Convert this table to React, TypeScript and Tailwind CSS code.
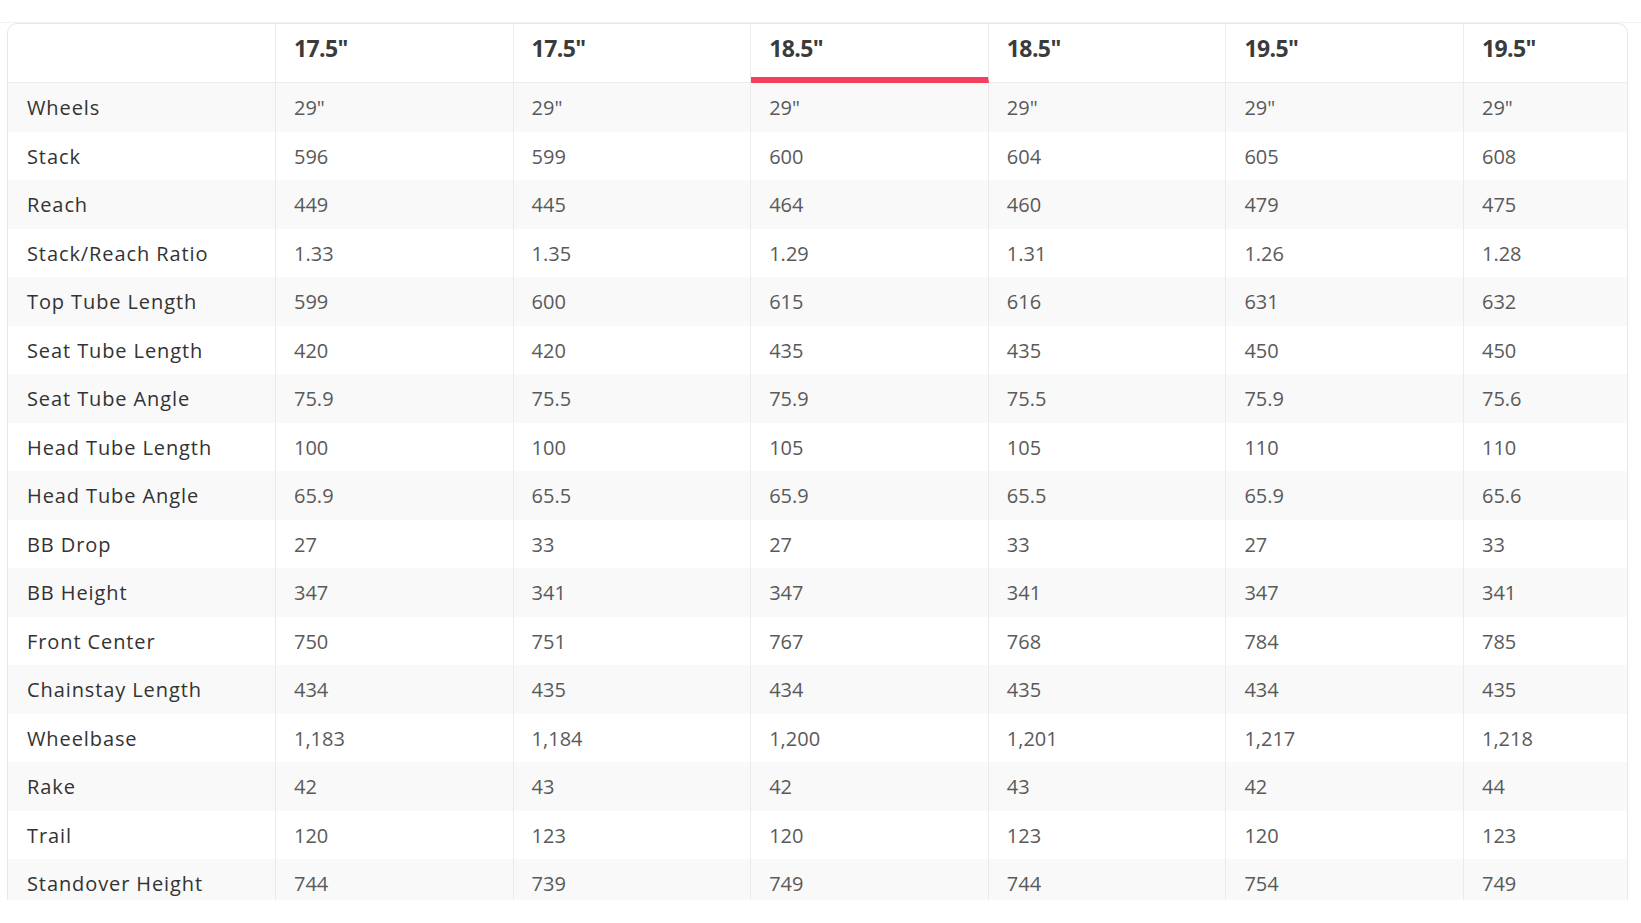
const sizes = ['17.5"', '17.5"', '18.5"', '18.5"', '19.5"', '19.5"'];
const activeCol = 2;

const rows: [string, string[]][] = [
  ["Wheels", ['29"', '29"', '29"', '29"', '29"', '29"']],
  ["Stack", ["596", "599", "600", "604", "605", "608"]],
  ["Reach", ["449", "445", "464", "460", "479", "475"]],
  ["Stack/Reach Ratio", ["1.33", "1.35", "1.29", "1.31", "1.26", "1.28"]],
  ["Top Tube Length", ["599", "600", "615", "616", "631", "632"]],
  ["Seat Tube Length", ["420", "420", "435", "435", "450", "450"]],
  ["Seat Tube Angle", ["75.9", "75.5", "75.9", "75.5", "75.9", "75.6"]],
  ["Head Tube Length", ["100", "100", "105", "105", "110", "110"]],
  ["Head Tube Angle", ["65.9", "65.5", "65.9", "65.5", "65.9", "65.6"]],
  ["BB Drop", ["27", "33", "27", "33", "27", "33"]],
  ["BB Height", ["347", "341", "347", "341", "347", "341"]],
  ["Front Center", ["750", "751", "767", "768", "784", "785"]],
  ["Chainstay Length", ["434", "435", "434", "435", "434", "435"]],
  ["Wheelbase", ["1,183", "1,184", "1,200", "1,201", "1,217", "1,218"]],
  ["Rake", ["42", "43", "42", "43", "42", "44"]],
  ["Trail", ["120", "123", "120", "123", "120", "123"]],
  ["Standover Height", ["744", "739", "749", "744", "754", "749"]],
];

const GeometryTable = () => {
  return (
    <div className="ml-[7px] w-[1621px] h-[877px] overflow-hidden rounded-t-[10px] border-x border-t border-[#e8e8e8] bg-white">
      <div className="w-[1694px]">
        {/* header */}
        <div className="flex h-[59px]">
          <div className="w-[268px] shrink-0 border-r border-b border-[#ebebeb]" />
          {sizes.map((s, i) => (
            <div
              key={i}
              className={
                i === activeCol
                  ? "w-[237.6px] shrink-0 border-r border-r-[#ebebeb] border-b-[6px] border-b-[#f43f5e] pl-[18px] pt-[8px]"
                  : "w-[237.6px] shrink-0 border-r border-b border-[#ebebeb] pl-[18px] pt-[8px]"
              }
            >
              <span className="text-[23px] leading-[32px] font-bold tracking-[-0.6px] text-[#3b3b3b]">{s}</span>
            </div>
          ))}
        </div>
        {/* body */}
        {rows.map(([label, values], r) => (
          <div key={label} className={r % 2 === 0 ? "flex h-[48.5px] bg-[#f9f9f9]" : "flex h-[48.5px] bg-white"}>
            <div className="w-[268px] shrink-0 flex items-center border-r border-[#ebebeb] pl-[19px] pt-[2px] text-[20px] leading-[28px] tracking-[0.9px] text-[#333333]">
              {label}
            </div>
            {values.map((v, i) => (
              <div
                key={i}
                className="w-[237.6px] shrink-0 flex items-center border-r border-[#ebebeb] pl-[18px] pt-[2px] text-[20px] leading-[28px] text-[#5a5a5a]"
              >
                {v}
              </div>
            ))}
          </div>
        ))}
      </div>
    </div>
  );
};

export default function App() {
  return (
    <div className="min-h-[923px] bg-white pt-[22px] font-['Open_Sans',sans-serif]">
      <div className="border-t border-[#f3f3f3]">
        <GeometryTable />
      </div>
    </div>
  );
}
